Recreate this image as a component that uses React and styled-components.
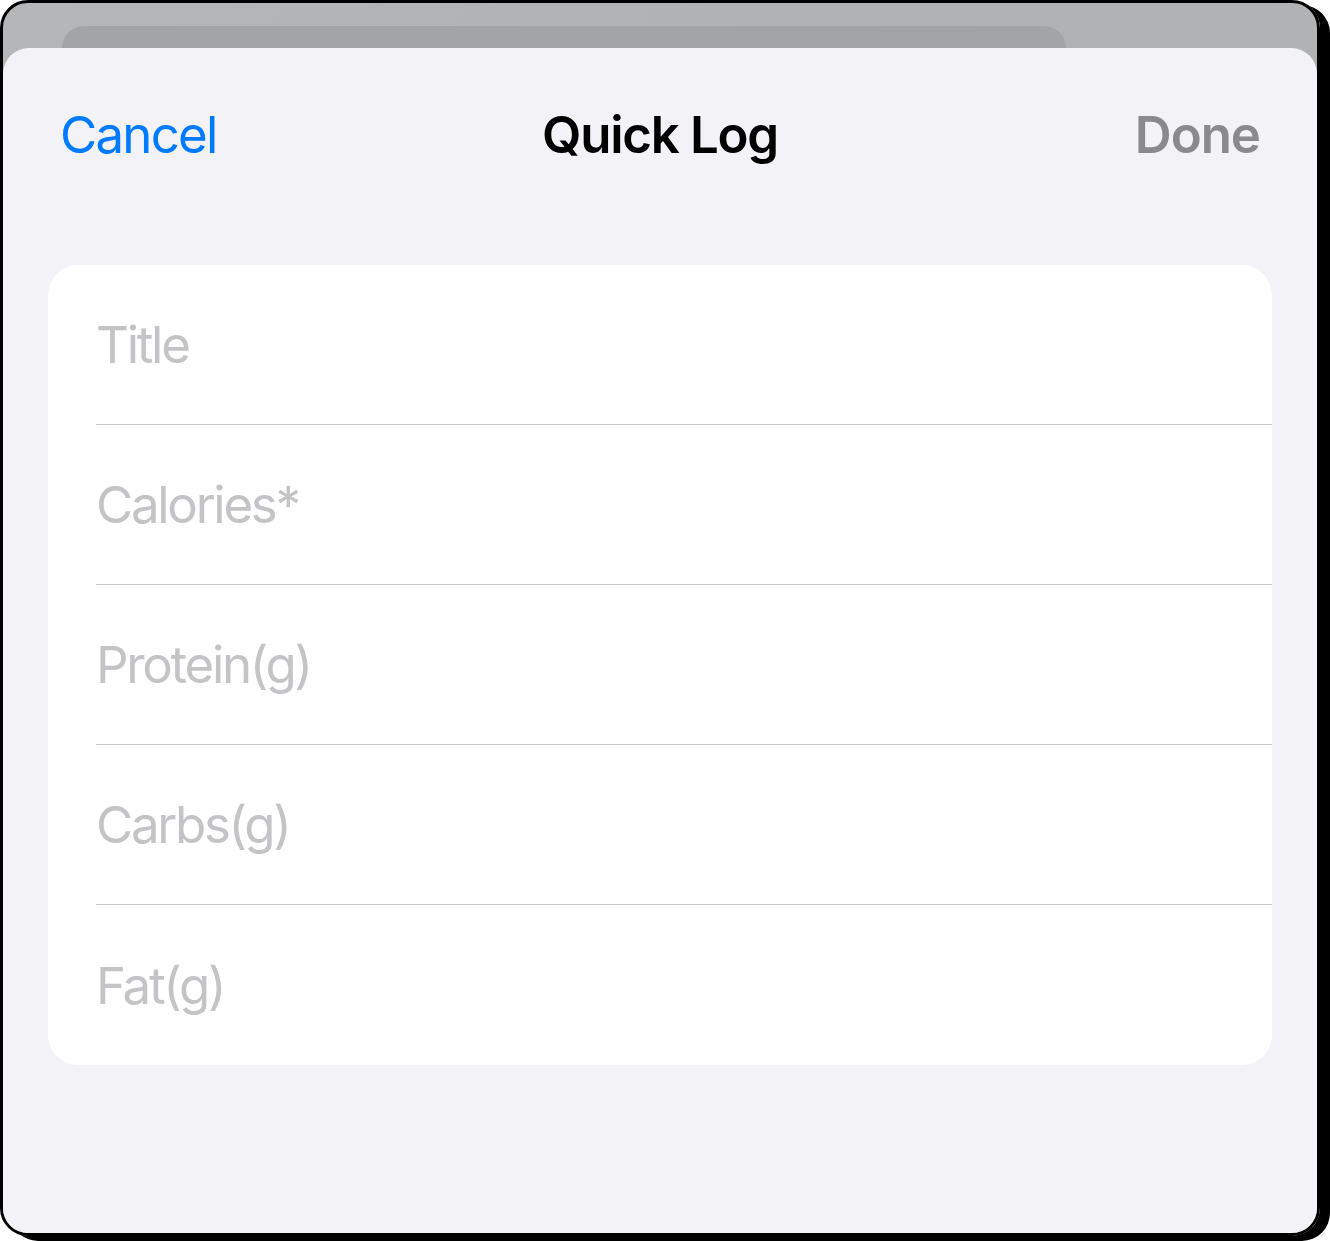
import React from 'react';
import styled, { createGlobalStyle } from 'styled-components';

const GlobalStyle = createGlobalStyle`
    html, body {
        margin: 0;
        padding: 0;
        background: #ffffff;
    }
    body {
        min-height: 1241px;
        font-family: Inter, "Noto Sans", "Liberation Sans", sans-serif;
        -webkit-font-smoothing: antialiased;
    }
`;

const fields = ['Title', 'Calories*', 'Protein(g)', 'Carbs(g)', 'Fat(g)'];

const App = () => {
    return (
        <>
            <GlobalStyle />
            <Device>
                <BackCard />
                <Sheet>
                    <NavBar>
                        <NavButton>Cancel</NavButton>
                        <NavTitle>Quick Log</NavTitle>
                        <NavButton align="right" disabled>
                            Done
                        </NavButton>
                    </NavBar>
                    <FormCard>
                        {fields.map((label, i) => (
                            <Row key={label}>
                                <RowInner last={i === fields.length - 1}>
                                    <Placeholder>{label}</Placeholder>
                                </RowInner>
                            </Row>
                        ))}
                    </FormCard>
                </Sheet>
            </Device>
        </>
    );
};

const Device = styled.div`
    width: 1314px;
    height: 1230px;
    border: 3px solid #000;
    border-radius: 28px;
    box-shadow: 10px 5px 0 #000;
    overflow: hidden;
    background: linear-gradient(100deg, #b5b6b7 0%, #b0b1b3 60%, #b2b3b5 100%);
    display: flex;
    flex-direction: column;
`;

const BackCard = styled.div`
    flex: none;
    width: 1004px;
    height: 22px;
    margin: 23px 0 0 59px;
    background: #a3a4a6;
    border-radius: 26px 26px 0 0;
`;

const Sheet = styled.div`
    flex: 1;
    background: #f2f2f7;
    border-radius: 26px 26px 0 0;
    display: flex;
    flex-direction: column;
`;

const NavBar = styled.div`
    height: 172px;
    padding: 0 57px 0 57px;
    display: grid;
    grid-template-columns: 1fr auto 1fr;
    align-items: center;
`;

const NavButton = styled.button`
    justify-self: ${({ align }) => (align === 'right' ? 'end' : 'start')};
    background: none;
    border: none;
    padding: 0;
    font-family: inherit;
    font-size: 51px;
    font-weight: ${({ disabled }) => (disabled ? 600 : 400)};
    letter-spacing: ${({ disabled }) => (disabled ? '-0.02em' : '-0.035em')};
    color: ${({ disabled }) => (disabled ? '#8a8a8e' : '#007aff')};
    cursor: pointer;
`;

const NavTitle = styled.div`
    font-size: 51px;
    font-weight: 600;
    letter-spacing: -0.025em;
    color: #000;
`;

const FormCard = styled.div`
    margin: 45px 45px 0;
    background: #ffffff;
    border-radius: 30px;
    overflow: hidden;
`;

const Row = styled.div`
    padding-left: 48px;
`;

const RowInner = styled.div`
    box-sizing: border-box;
    height: 160px;
    display: flex;
    align-items: center;
    border-bottom: ${({ last }) => (last ? 'none' : '1px solid #c8c8ca')};
`;

const Placeholder = styled.span`
    font-size: 51px;
    letter-spacing: -0.045em;
    color: #c4c4c7;
`;

export default App;
